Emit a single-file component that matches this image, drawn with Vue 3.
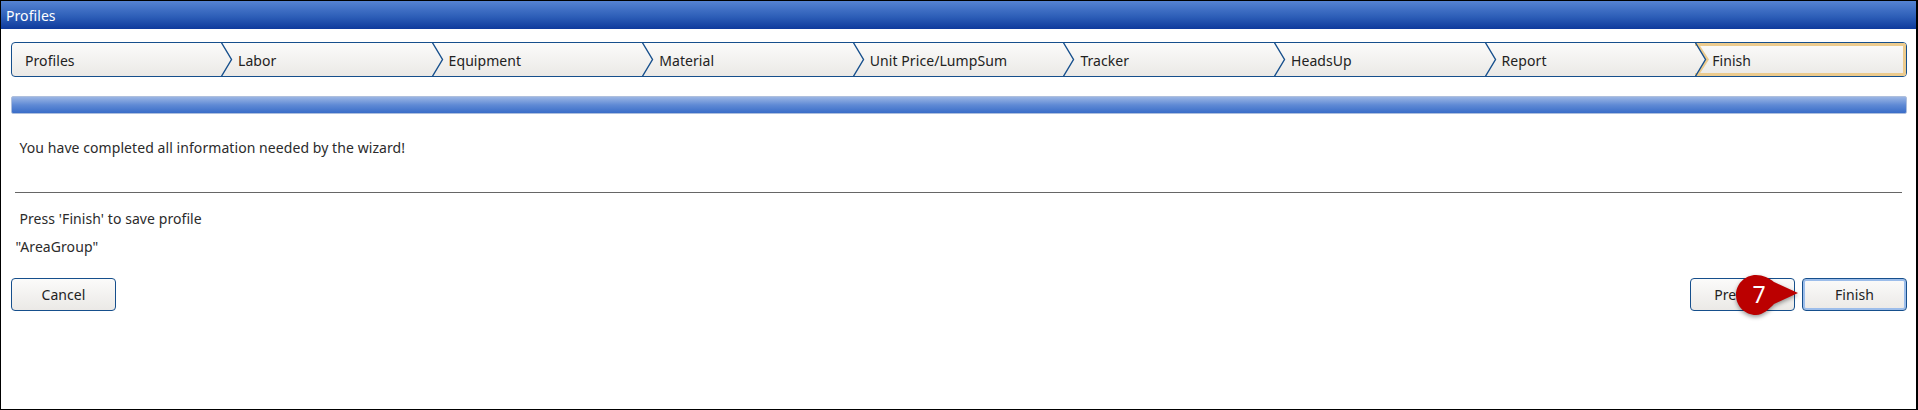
<script setup>
const steps = ['Profiles','Labor','Equipment','Material','Unit Price/LumpSum','Tracker','HeadsUp','Report','Finish']
</script>

<template>
  <div class="window">
    <div class="title">Profiles</div>
    <div class="body">
      <div class="crumbs">
        <div v-for="(s,i) in steps" :key="s" class="step" :class="{ first: i===0, last: i===steps.length-1 }">
          <svg v-if="i>0" class="chev" width="14" height="35" viewBox="0 0 14 35">
            <path v-if="i===steps.length-1" d="M2 1.5 L12.5 17.5 L2 33.5" fill="none" stroke="#eccb8e" stroke-width="2.5"/>
            <path d="M0 0 L10.5 17.5 L0 35" fill="none" stroke="#164f8c" stroke-width="1.4"/>
          </svg>
          <span>{{ s }}</span>
        </div>
      </div>
      <div class="progress"></div>
      <p class="msg">You have completed all information needed by the wizard!</p>
      <div class="rule"></div>
      <p class="press">Press 'Finish' to save profile</p>
      <p class="name">"AreaGroup"</p>
      <div class="actions">
        <button class="btn">Cancel</button>
        <div class="right">
          <button class="btn">Previous</button>
          <button class="btn focus">Finish</button>
          <svg class="marker" width="76" height="56" viewBox="0 0 76 56">
            <path d="M23 6 C30 6 36 9 41 13 L65 24 L41 35 C36 40 30 46 23 46 C12 46 3 37 3 26 C3 15 12 6 23 6 Z" fill="#bb0000"/>
          </svg>
          <span class="num">7</span>
        </div>
      </div>
    </div>
  </div>
</template>

<style>
html, body { margin: 0; background: #fff; }
</style>

<style scoped>
.window {
  box-sizing: border-box; width: 1918px; height: 410px;
  border: 1px solid #000; border-width: 1px 2px 1px 1px;
  background: #fff; font-family: "Noto Sans", "Open Sans", sans-serif;
  font-size: 14px; letter-spacing: 0.07px; color: #2b2b2b; overflow: hidden;
}
.title {
  height: 28px; line-height: 29px; padding-left: 5px; color: #fff; font-size: 14px;
  background: linear-gradient(#5583d3, #2e5fb8 55%, #0e3a9c);
}
.body { padding: 13px 9px 0 10px; }
.crumbs {
  display: flex; box-sizing: border-box; height: 35px;
  border: 1.5px solid #164f8c; border-radius: 4px;
  background: linear-gradient(#fbfbfa, #ebe9e6);
}
.step {
  flex: 0 0 210.6px; position: relative; display: flex; align-items: center;
  box-sizing: border-box; padding: 1px 0 0 17px; color: #222;
}
.step.first { flex-basis: 209px; padding-left: 13px; }
.step.last {
  flex: 1;
  box-shadow: inset 0 4px 0 -1px #eccb8e, inset 0 -4px 0 -1px #eccb8e, inset -4px 0 0 -1px #eccb8e;
  border-radius: 0 3px 3px 0;
}
.chev { position: absolute; left: 0; top: -1.5px; }
.progress {
  margin-top: 19px; height: 18px; box-sizing: border-box;
  border: 1px solid #aebfdd; border-radius: 2px;
  background: linear-gradient(#9ab5e4, #5f8ad5 50%, #3a6dc8);
}
p { margin: 0; }
.msg { margin: 24px 0 0 8.5px; line-height: 20px; }
.rule { margin: 34px 5px 0 4px; height: 1px; background: #666; }
.press { margin: 16px 0 0 8.5px; line-height: 20px; }
.name { margin: 8px 0 0 4.5px; line-height: 20px; }
.actions { display: flex; justify-content: space-between; margin-top: 21px; }
.right { display: flex; gap: 7px; position: relative; }
.btn {
  width: 105px; height: 33px; box-sizing: border-box; padding: 0;
  border: 1.5px solid #164f8c; border-radius: 4px; font: inherit; letter-spacing: inherit; color: #222;
  background: linear-gradient(#fbfbfa, #ebe9e6);
}
.btn.focus { box-shadow: inset 0 0 0 2px #9cbdea; }
.marker { position: absolute; left: 43px; top: -9px; filter: drop-shadow(0 2px 2px rgba(0,0,0,.4)); }
.num {
  position: absolute; left: 62px; top: 0; width: 14px; text-align: center;
  color: #fff; font-size: 23px; line-height: 32px;
}
</style>
